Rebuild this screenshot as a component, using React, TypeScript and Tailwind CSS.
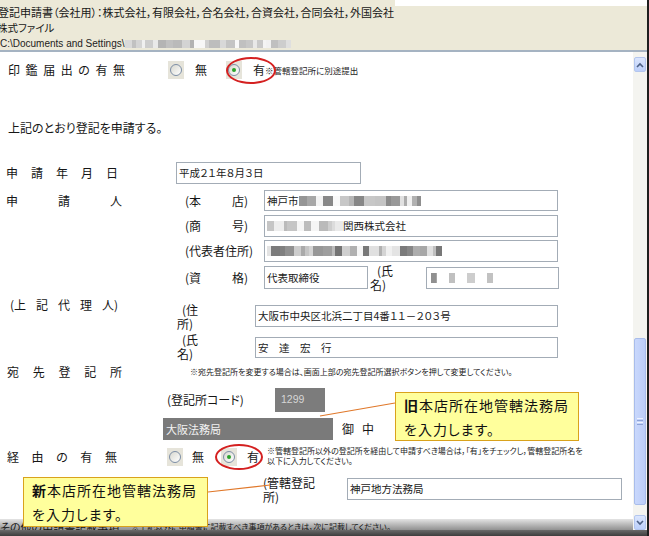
import React from "react";

const JP =
  "font-['Noto_Sans_CJK_JP','Noto_Sans_CJK_SC',sans-serif] [font-feature-settings:'palt']";

type Blob = [number, string];

// モザイク部分（個人情報のぼかし）
function makeBlobs(total: number, seed: number, light = false): Blob[] {
  const out: Blob[] = [];
  let s = seed;
  let used = 0;
  while (used < total) {
    s = (s * 9301 + 49297) % 233280;
    const w = 3 + Math.floor((s / 233280) * 9);
    s = (s * 9301 + 49297) % 233280;
    const r = s / 233280;
    const g = light ? 175 + Math.floor(r * 75) : 115 + Math.floor(r * 135);
    out.push([Math.min(w, total - used), `rgb(${g},${g},${g})`]);
    used += w;
  }
  return out;
}

function Blur({ total, seed, light, h = 10 }: { total: number; seed: number; light?: boolean; h?: number }) {
  return (
    <span className="inline-flex items-center">
      {makeBlobs(total, seed, light).map(([w, c], i) => (
        <span key={i} style={{ width: w, height: h, background: c }} />
      ))}
    </span>
  );
}

function Spaced({ chars, className = "" }: { chars: string[]; className?: string }) {
  return (
    <div className={`flex justify-between ${className}`}>
      {chars.map((c, i) => (
        <span key={i}>{c}</span>
      ))}
    </div>
  );
}

function Field({ className = "", children }: { className?: string; children?: React.ReactNode }) {
  return (
    <div
      className={`border border-[#a3acb6] bg-white flex items-center pl-[2px] text-[10.5px] text-[#1a1a1a] overflow-hidden whitespace-nowrap ${className}`}
    >
      {children}
    </div>
  );
}

function Radio({ checked }: { checked?: boolean }) {
  return (
    <span className="w-[16px] h-[18px] bg-[#e6e4da] flex items-center justify-center shrink-0">
      <span className="w-[12px] h-[12px] rounded-full border border-[#7d8ea6] bg-gradient-to-br from-[#d8d8d0] to-white flex items-center justify-center">
        {checked && <span className="w-[4px] h-[4px] rounded-full bg-[#2aa22a]" />}
      </span>
    </span>
  );
}

function TwoLine({ a, b, indent = 5 }: { a: string; b: string; indent?: number }) {
  return (
    <div className="text-[12px] leading-[14px]">
      <div style={{ paddingLeft: indent }}>{a}</div>
      <div>{b}</div>
    </div>
  );
}

function ArrowBtn({ up }: { up?: boolean }) {
  return (
    <div className="h-[15px] mx-[1px] rounded-[2px] border border-[#b3c6ee] bg-gradient-to-b from-[#dbe6fd] to-[#bccffa] flex items-center justify-center">
      <svg width="8" height="6" viewBox="0 0 8 6">
        <path
          d={up ? "M1 5 L4 2 L7 5" : "M1 1 L4 4 L7 1"}
          fill="none"
          stroke="#4d6185"
          strokeWidth="1.6"
        />
      </svg>
    </div>
  );
}

function Callout({ head, className }: { head: string; className: string }) {
  return (
    <div
      className={`absolute bg-[#ffff9c] border border-[#d9a21c] pl-[8px] text-[14px] leading-[24px] tracking-[1px] text-[#111] ${className}`}
    >
      <div>
        <span className="font-bold">{head}</span>本店所在地管轄法務局
      </div>
      <div>を入力します。</div>
    </div>
  );
}

export default function App() {
  return (
    <div className={`w-[649px] h-[536px] overflow-hidden flex bg-white text-[#161616] ${JP}`}>
      <div className="flex-1 flex flex-col min-w-0">
        {/* ヘッダー */}
        <div className="h-[52px] shrink-0 bg-[#ece9d8] border-b-2 border-[#a5b3c2] relative pt-[4px] text-[11px] leading-[16px] whitespace-nowrap">
          <div className="absolute top-0 left-[395px] right-0 h-[6px] bg-white" />
          <div className="-ml-[2px] relative">
            登記申請書（会社用）：株式会社，有限会社，合名会社，合資会社，合同会社，外国会社
          </div>
          <div className="-ml-[3px] text-[10.5px]">株式ファイル</div>
          <div className="flex items-center font-['Liberation_Sans',sans-serif] text-[10px] text-[#222]">
            {"C:\\Documents and Settings\\"}
            <Blur total={166} seed={7} light h={8} />
          </div>
        </div>

        <div className="flex-1 flex min-h-0">
          {/* 本文 */}
          <div className="flex-1 relative overflow-hidden text-[12px]">
            {/* 印鑑届出の有無 */}
            <div className="mt-[3px] h-[30px] flex items-center pl-[8px]">
              <Spaced chars={["印", "鑑", "届", "出", "の", "有", "無"]} className="w-[117px]" />
              <span className="ml-[43px]"><Radio /></span>
              <span className="ml-[11px]">無</span>
              <span className="ml-[19px]"><Radio checked /></span>
              <span className="ml-[11px]">有</span>
              <span className="text-[8.5px] text-[#222]">※管轄登記所に別途提出</span>
            </div>

            <div className="mt-[33px] h-[20px] flex items-center pl-[8px]">上記のとおり登記を申請する。</div>

            {/* 申請年月日 */}
            <div className="mt-[24px] h-[22px] flex items-center pl-[6px]">
              <Spaced chars={["申", "請", "年", "月", "日"]} className="w-[112px]" />
              <Field className="ml-[58px] w-[185px] h-[22px]">平成２１年８月３日</Field>
            </div>

            {/* 申請人 */}
            <div className="mt-[6px] h-[21px] flex items-center pl-[6px]">
              <Spaced chars={["申", "請", "人"]} className="w-[116px]" />
              <Spaced chars={["(本", "店)"]} className="ml-[63px] w-[63px]" />
              <Field className="ml-[16px] w-[294px] h-[21px]">
                神戸市<Blur total={122} seed={21} />
              </Field>
            </div>
            <div className="mt-[4px] h-[22px] flex items-center pl-[185px]">
              <Spaced chars={["(商", "号)"]} className="w-[63px]" />
              <Field className="ml-[16px] w-[294px] h-[22px]">
                <Blur total={76} seed={33} light />
                関西株式会社
              </Field>
            </div>
            <div className="mt-[3px] h-[22px] flex items-center pl-[185px]">
              <div className="w-[63px] whitespace-nowrap">(代表者住所)</div>
              <Field className="ml-[16px] w-[294px] h-[22px]">
                <Blur total={175} seed={48} />
              </Field>
            </div>
            <div className="mt-[4px] h-[23px] flex items-center pl-[185px]">
              <Spaced chars={["(資", "格)"]} className="w-[63px]" />
              <Field className="ml-[16px] w-[104px] h-[23px]">代表取締役</Field>
              <div className="ml-[2px]">
                <TwoLine a="(氏" b="名)" indent={7} />
              </div>
              <Field className="ml-[33px] w-[133px] h-[22px] pl-[4px]">
                <span className="flex gap-[12px]">
                  <Blur total={6} seed={3} />
                  <Blur total={6} seed={9} light />
                  <Blur total={8} seed={14} light />
                  <Blur total={6} seed={19} />
                </span>
              </Field>
            </div>

            {/* 上記代理人 */}
            <div className="mt-[8px] h-[30px] flex items-start pl-[10px]">
              <Spaced chars={["(上", "記", "代", "理", "人)"]} className="w-[108px] leading-[16px]" />
              <div className="ml-[59px] mt-[6px] w-[78px]">
                <TwoLine a="(住" b="所)" />
              </div>
              <Field className="mt-[8px] w-[303px] h-[22px]">大阪市中央区北浜二丁目4番１１－２０３号</Field>
            </div>
            <div className="mt-[5px] h-[26px] flex items-start pl-[177px]">
              <div className="mt-[1px] w-[78px]">
                <TwoLine a="(氏" b="名)" />
              </div>
              <Field className="mt-[5px] w-[303px] h-[21px]">安　達　宏　行</Field>
            </div>

            {/* 宛先登記所 */}
            <div className="mt-[4px] h-[20px] flex items-center pl-[7px]">
              <Spaced chars={["宛", "先", "登", "記", "所"]} className="w-[115px]" />
              <span className="ml-[68px] text-[8px] text-[#222] whitespace-nowrap">
                ※宛先登記所を変更する場合は、画面上部の宛先登記所選択ボタンを押して変更してください。
              </span>
            </div>
            <div className="mt-[6px] h-[24px] flex items-center pl-[167px]">
              <span className="w-[86px] whitespace-nowrap">(登記所コード)</span>
              <div className="ml-[22px] w-[50px] h-[24px] bg-[#7c7c7c] flex items-center pl-[6px] text-[10.5px] text-[#d6d6d6] font-['Liberation_Sans',sans-serif]">
                1299
              </div>
            </div>
            <div className="mt-[6px] h-[22px] flex items-center pl-[163px]">
              <div className="w-[170px] h-[22px] bg-[#7a7a7a] flex items-center pl-[3px] text-[11px] text-[#f2f2f2]">
                大阪法務局
              </div>
              <span className="ml-[9px]">御</span>
              <span className="ml-[8px]">中</span>
            </div>

            {/* 経由の有無 */}
            <div className="mt-[6px] h-[22px] flex items-center pl-[7px]">
              <Spaced chars={["経", "由", "の", "有", "無"]} className="w-[110px]" />
              <span className="ml-[50px]"><Radio /></span>
              <span className="ml-[9px]">無</span>
              <span className="ml-[17px]"><Radio checked /></span>
              <span className="ml-[10px]">有</span>
              <div className="ml-[8px] text-[8px] leading-[10px] text-[#222] whitespace-nowrap -mt-[2px]">
                <div>※管轄登記所以外の登記所を経由して申請すべき場合は，「有」をチェックし，管轄登記所名を</div>
                <div>以下に入力してください。</div>
              </div>
            </div>
            <div className="mt-[7px] h-[27px] flex items-start pl-[263px]">
              <div className="mt-[1px] w-[84px] whitespace-nowrap">
                <TwoLine a="(管轄登記" b="所)" indent={0} />
              </div>
              <Field className="mt-[3px] w-[275px] h-[22px]">神戸地方法務局</Field>
            </div>

            {/* その他の申請書記載事項 */}
            <div className="mt-[17px] h-[16px] flex items-center whitespace-nowrap bg-gradient-to-b from-[#e4e4e4] to-[#6e6e6e]">
              <span className="text-[11px]">その他の申請書記載事項</span>
              <span className="ml-[12px] text-[8px]">
                ※上記以外に申請書に記載すべき事項があるときは，次に記載してください。
              </span>
            </div>

            {/* 注記 */}
            <div className="absolute left-[226px] top-[5px] w-[50px] h-[27px] rounded-[50%] border-2 border-[#d42020]" />
            <div className="absolute left-[215px] top-[392px] w-[48px] h-[26px] rounded-[50%] border-2 border-[#d42020]" />
            <svg className="absolute left-0 top-0" width="633" height="478">
              <line x1="320" y1="364" x2="395" y2="351" stroke="#e0782a" strokeWidth="1.2" />
              <line x1="208" y1="440" x2="270" y2="433" stroke="#e0782a" strokeWidth="1.2" />
            </svg>
            <Callout head="旧" className="left-[395px] top-[340px] w-[184px] h-[49px]" />
            <Callout head="新" className="left-[23px] top-[425px] w-[185px] h-[50px]" />
          </div>

          {/* スクロールバー */}
          <div className="w-[14px] shrink-0 flex flex-col bg-[#f4f4f0] pt-[5px]">
            <ArrowBtn up />
            <div className="h-[266px]" />
            <div className="h-[167px] mx-[1px] rounded-[2px] border border-[#a9bdeb] bg-gradient-to-r from-[#c9d8fc] to-[#bccdf8] flex flex-col items-center justify-center gap-[1px]">
              <span className="w-[6px] h-[1px] bg-[#eef3ff]" />
              <span className="w-[6px] h-[1px] bg-[#8da3d6]" />
              <span className="w-[6px] h-[1px] bg-[#eef3ff]" />
              <span className="w-[6px] h-[1px] bg-[#8da3d6]" />
            </div>
            <div className="flex-1" />
            <ArrowBtn />
          </div>
        </div>

        <div className="h-[6px] shrink-0 bg-gradient-to-b from-[#6a6a6a] to-[#3e3e3e]" />
      </div>
      <div className="w-[2px] shrink-0 bg-[#1e1e1e]" />
    </div>
  );
}
